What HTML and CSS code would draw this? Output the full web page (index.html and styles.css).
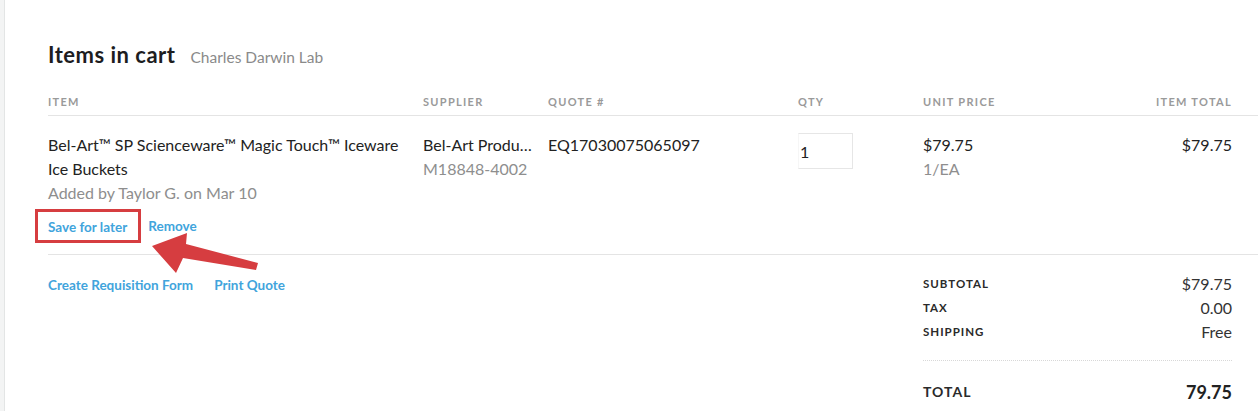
FILE: index.html
```html
<!DOCTYPE html>
<html>
<head>
<meta charset="utf-8">
<link rel="stylesheet" href="styles.css">
</head>
<body>
<div class="page">
  <main class="card">
    <header class="title-row">
      <h1>Items in cart</h1>
      <span class="lab">Charles Darwin Lab</span>
    </header>
    <div class="grid thead">
      <div>Item</div>
      <div>Supplier</div>
      <div>Quote #</div>
      <div>Qty</div>
      <div>Unit Price</div>
      <div class="right">Item Total</div>
    </div>
    <div class="grid item-row">
      <div class="cell-item">
        <div class="name">Bel-Art™ SP Scienceware™ Magic Touch™ Iceware Ice Buckets</div>
        <div class="muted">Added by Taylor G. on Mar 10</div>
        <div class="actions">
          <span class="hl-wrap"><a class="link" href="#">Save for later</a><span class="hl-box"></span></span>
          <a class="link" href="#">Remove</a>
        </div>
      </div>
      <div>
        <div class="trunc">Bel-Art Products</div>
        <div class="muted">M18848-4002</div>
      </div>
      <div>EQ17030075065097</div>
      <div><div class="qty">1</div></div>
      <div>
        <div>$79.75</div>
        <div class="muted">1/EA</div>
      </div>
      <div class="right">$79.75</div>
    </div>
    <div class="footer">
      <div class="footer-links">
        <a class="link" href="#">Create Requisition Form</a>
        <a class="link" href="#">Print Quote</a>
      </div>
      <div class="totals">
        <div class="trow"><span class="tlabel">Subtotal</span><span>$79.75</span></div>
        <div class="trow"><span class="tlabel">Tax</span><span>0.00</span></div>
        <div class="trow"><span class="tlabel">Shipping</span><span>Free</span></div>
        <div class="trow grand"><span class="tlabel">Total</span><span class="gval">79.75</span></div>
      </div>
    </div>
    <svg class="arrow" width="120" height="50" viewBox="0 0 120 50">
      <polygon points="2,13 37,0 36,11 108,30 106,37 33,25 26,40" fill="#d63d40"/>
    </svg>
  </main>
</div>
</body>
</html>
```
FILE: styles.css
```css
* { box-sizing: border-box; }
html, body { margin: 0; padding: 0; background: #fff; }
body {
  font-family: Lato, "Open Sans", sans-serif;
  color: #222;
  font-size: 16px;
}
.page {
  min-height: 411px;
  background: #f3f4f4;
  padding-left: 4px;
}
.card {
  position: relative;
  min-height: 411px;
  background: #fff;
  border-left: 1px solid #e3e5e5;
  padding: 43px 0 0 43px;
}
.title-row {
  display: flex;
  align-items: baseline;
  gap: 15px;
  margin-bottom: 27px;
}
h1 {
  margin: 0;
  font-size: 22px;
  line-height: 24px;
  font-weight: 700;
  letter-spacing: 0.5px;
  color: #1d1d1f;
}
.lab {
  font-size: 15.5px;
  color: #8a8a8a;
}
.grid {
  display: grid;
  grid-template-columns: 375px 125px 250px 125px 1fr auto;
  padding-right: 26px;
  border-bottom: 1px solid #e4e4e4;
}
.thead {
  font-size: 11px;
  line-height: 16px;
  font-weight: 700;
  letter-spacing: 1.3px;
  text-transform: uppercase;
  color: #9a9a9a;
  padding-bottom: 5px;
}
.right { text-align: right; }
.item-row {
  padding-top: 17px;
  padding-bottom: 19px;
  line-height: 24px;
}
.name { padding-right: 20px; }
.muted { color: #8e8e8e; line-height: 23px; }
.trunc {
  white-space: nowrap;
  overflow: hidden;
  text-overflow: ellipsis;
  padding-right: 16px;
}
.actions {
  display: flex;
  gap: 21px;
  margin-top: 14px;
  line-height: 16px;
}
.link {
  font-size: 13.5px;
  font-weight: 700;
  color: #41a4dc;
  text-decoration: none;
}
.hl-wrap { position: relative; }
.hl-box {
  position: absolute;
  left: -13px;
  right: -14px;
  top: -9px;
  bottom: -8px;
  border: 3px solid #d63d40;
}
.qty {
  width: 55px;
  height: 36px;
  border: 1px solid #e6e6e6;
  border-left-color: #f6f6f6;
  padding-left: 1px;
  line-height: 36px;
}
.footer {
  display: flex;
  justify-content: space-between;
  padding: 18px 26px 0 0;
}
.footer-links {
  display: flex;
  gap: 21px;
  line-height: 24px;
  height: 24px;
}
.totals { width: 309px; margin-top: -1px; }
.trow {
  display: flex;
  justify-content: space-between;
  align-items: center;
  height: 24px;
  color: #333;
}
.trow > span { line-height: 24px; }
.tlabel {
  font-size: 11.5px;
  font-weight: 700;
  letter-spacing: 1px;
  text-transform: uppercase;
  color: #2a2a2a;
}
.trow.grand {
  height: auto;
  margin-top: 16px;
  padding-top: 19px;
  border-top: 1px dotted #d8d8d8;
}
.grand .tlabel { font-size: 14px; }
.gval { font-size: 18px; font-weight: 700; color: #222; }
.arrow {
  position: absolute;
  left: 145px;
  top: 233px;
}
```
